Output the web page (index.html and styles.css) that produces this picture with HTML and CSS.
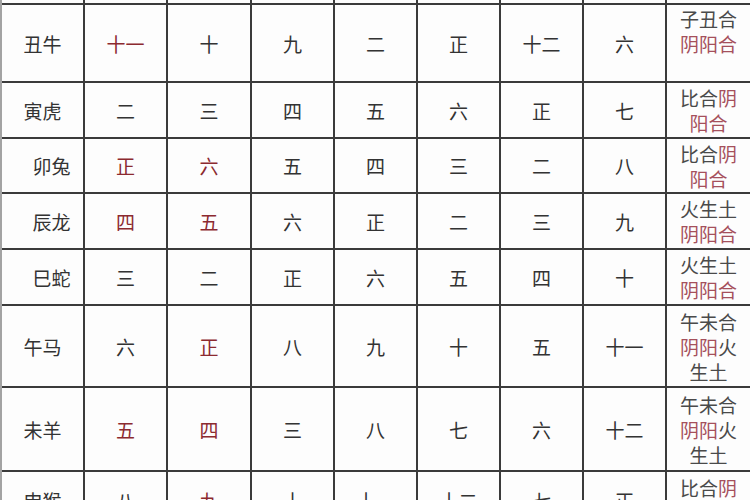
FILE: index.html
```html
<!DOCTYPE html>
<html lang="zh">
<head>
<meta charset="utf-8">
<link rel="stylesheet" href="styles.css">
</head>
<body>
<div class="table">
  <div class="c"></div><div class="c"></div><div class="c"></div><div class="c"></div><div class="c"></div><div class="c"></div><div class="c"></div><div class="c"></div><div class="c"></div>

  <div class="c">丑牛</div><div class="c red">十一</div><div class="c">十</div><div class="c">九</div><div class="c">二</div><div class="c">正</div><div class="c">十二</div><div class="c">六</div>
  <div class="c note top"><p class="lines">子丑合<br><span class="r">阴阳合</span></p></div>

  <div class="c">寅虎</div><div class="c">二</div><div class="c">三</div><div class="c">四</div><div class="c">五</div><div class="c">六</div><div class="c">正</div><div class="c">七</div>
  <div class="c note"><p class="lines">比合<span class="r">阴</span><br><span class="r">阳合</span></p></div>

  <div class="c shift">卯兔</div><div class="c red">正</div><div class="c red">六</div><div class="c">五</div><div class="c">四</div><div class="c">三</div><div class="c">二</div><div class="c">八</div>
  <div class="c note"><p class="lines">比合<span class="r">阴</span><br><span class="r">阳合</span></p></div>

  <div class="c shift">辰龙</div><div class="c red">四</div><div class="c red">五</div><div class="c">六</div><div class="c">正</div><div class="c">二</div><div class="c">三</div><div class="c">九</div>
  <div class="c note"><p class="lines">火生土<br><span class="r">阴阳合</span></p></div>

  <div class="c shift">巳蛇</div><div class="c">三</div><div class="c">二</div><div class="c">正</div><div class="c">六</div><div class="c">五</div><div class="c">四</div><div class="c">十</div>
  <div class="c note"><p class="lines">火生土<br><span class="r">阴阳合</span></p></div>

  <div class="c">午马</div><div class="c">六</div><div class="c red">正</div><div class="c">八</div><div class="c">九</div><div class="c">十</div><div class="c">五</div><div class="c">十一</div>
  <div class="c note"><p class="lines">午未合<br><span class="r">阴阳</span>火<br>生土</p></div>

  <div class="c">未羊</div><div class="c red">五</div><div class="c red">四</div><div class="c">三</div><div class="c">八</div><div class="c">七</div><div class="c">六</div><div class="c">十二</div>
  <div class="c note"><p class="lines">午未合<br><span class="r">阴阳</span>火<br>生土</p></div>

  <div class="c">申猴</div><div class="c">八</div><div class="c red">九</div><div class="c">十</div><div class="c">十一</div><div class="c">十二</div><div class="c">七</div><div class="c">正</div>
  <div class="c note"><p class="lines">比合<span class="r">阴</span><br><span class="r">阳合</span></p></div>
</div>
</body>
</html>
```
FILE: styles.css
```css
html, body {
  margin: 0;
  padding: 0;
  background: #ffffff;
}
body {
  width: 750px;
  height: 500px;
  overflow: hidden;
  font-family: "Noto Sans CJK SC", "Noto Sans", sans-serif;
}
.table {
  display: grid;
  grid-template-columns: 81px 81px 82px 81px 81px 81px 81px 81px 83px;
  grid-template-rows: 3px 76px 54px 53px 54px 54px 80px 82px 56px;
  gap: 2px;
  background: #3b3b3b;
  border-left: 2px solid #a3a3a3;
}
.c {
  background: #fdfdfd;
  display: flex;
  align-items: center;
  justify-content: center;
  font-size: 19px;
  line-height: 25px;
  color: #333333;
  text-align: center;
  overflow: hidden;
}
.c.red {
  color: #8c2a30;
}
.c.shift {
  padding-left: 18px;
}
.c.note {
  color: #4a4a4a;
  padding-left: 0;
}
.lines {
  margin: 0;
  white-space: nowrap;
}
.c.note.top {
  align-items: flex-start;
  padding-top: 1px;
}
.r {
  color: #a5505c;
}
```
